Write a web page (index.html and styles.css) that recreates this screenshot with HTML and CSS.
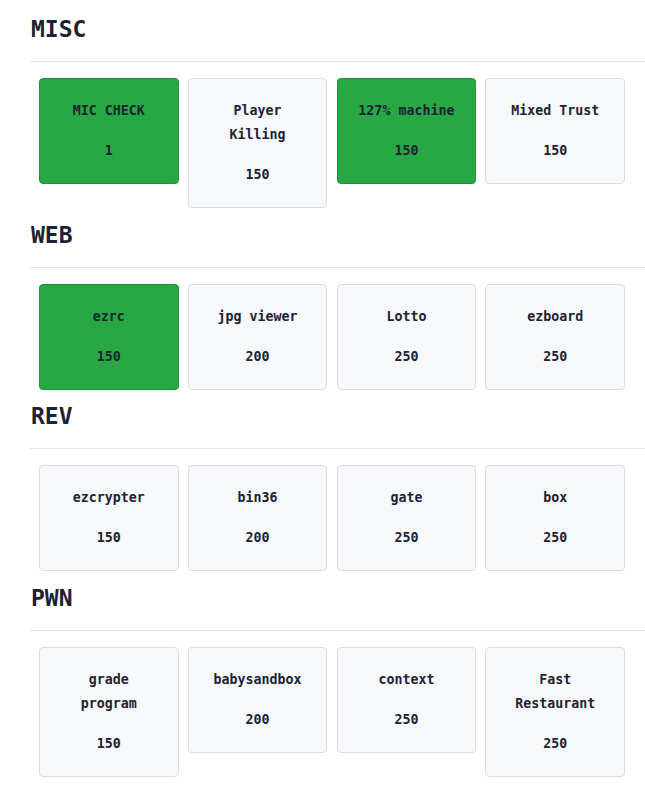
FILE: index.html
```html
<!DOCTYPE html>
<html>
<head>
<meta charset="utf-8">
<link rel="stylesheet" href="styles.css">
</head>
<body>
<main class="board">
  <section class="cat">
    <h2 class="cat-title">MISC</h2>
    <hr class="rule">
    <div class="cards">
      <div class="card solved"><div class="name">MIC CHECK</div><div class="pts">1</div></div>
      <div class="card"><div class="name">Player Killing</div><div class="pts">150</div></div>
      <div class="card solved"><div class="name">127% machine</div><div class="pts">150</div></div>
      <div class="card"><div class="name">Mixed Trust</div><div class="pts">150</div></div>
    </div>
  </section>
  <section class="cat">
    <h2 class="cat-title">WEB</h2>
    <hr class="rule">
    <div class="cards">
      <div class="card solved"><div class="name">ezrc</div><div class="pts">150</div></div>
      <div class="card"><div class="name">jpg viewer</div><div class="pts">200</div></div>
      <div class="card"><div class="name">Lotto</div><div class="pts">250</div></div>
      <div class="card"><div class="name">ezboard</div><div class="pts">250</div></div>
    </div>
  </section>
  <section class="cat">
    <h2 class="cat-title">REV</h2>
    <hr class="rule">
    <div class="cards">
      <div class="card"><div class="name">ezcrypter</div><div class="pts">150</div></div>
      <div class="card"><div class="name">bin36</div><div class="pts">200</div></div>
      <div class="card"><div class="name">gate</div><div class="pts">250</div></div>
      <div class="card"><div class="name">box</div><div class="pts">250</div></div>
    </div>
  </section>
  <section class="cat">
    <h2 class="cat-title">PWN</h2>
    <hr class="rule">
    <div class="cards">
      <div class="card"><div class="name">grade program</div><div class="pts">150</div></div>
      <div class="card"><div class="name">babysandbox</div><div class="pts">200</div></div>
      <div class="card"><div class="name">context</div><div class="pts">250</div></div>
      <div class="card"><div class="name">Fast Restaurant</div><div class="pts">250</div></div>
    </div>
  </section>
</main>
</body>
</html>
```
FILE: styles.css
```css
html, body {
  margin: 0;
  padding: 0;
  background: #ffffff;
}
body {
  font-family: "DejaVu Sans Mono", "Liberation Mono", monospace;
  color: #1d2233;
}
.board {
  padding: 14px 0 0 30px;
}
.cat-title {
  margin: 0;
  padding-left: 1px;
  font-size: 23px;
  line-height: 30px;
  font-weight: bold;
  color: #1d2233;
}
.rule {
  margin: 17px 0 16px 0;
  border: 0;
  border-top: 1px solid #e6e6e6;
  height: 0;
}
.cards {
  display: flex;
  align-items: flex-start;
  gap: 9.33px;
  padding-left: 9px;
  margin-bottom: 11.5px;
}
.card {
  width: 139.5px;
  box-sizing: border-box;
  padding: 20px 20px;
  background: #f7f8fa;
  border: 1px solid #dadcdf;
  border-radius: 4px;
  text-align: center;
  font-size: 13.3px;
  font-weight: bold;
  line-height: 24px;
}
.card.solved {
  background: #28a745;
  border-color: #229139;
}
.name {
  margin-bottom: 16px;
}
```
